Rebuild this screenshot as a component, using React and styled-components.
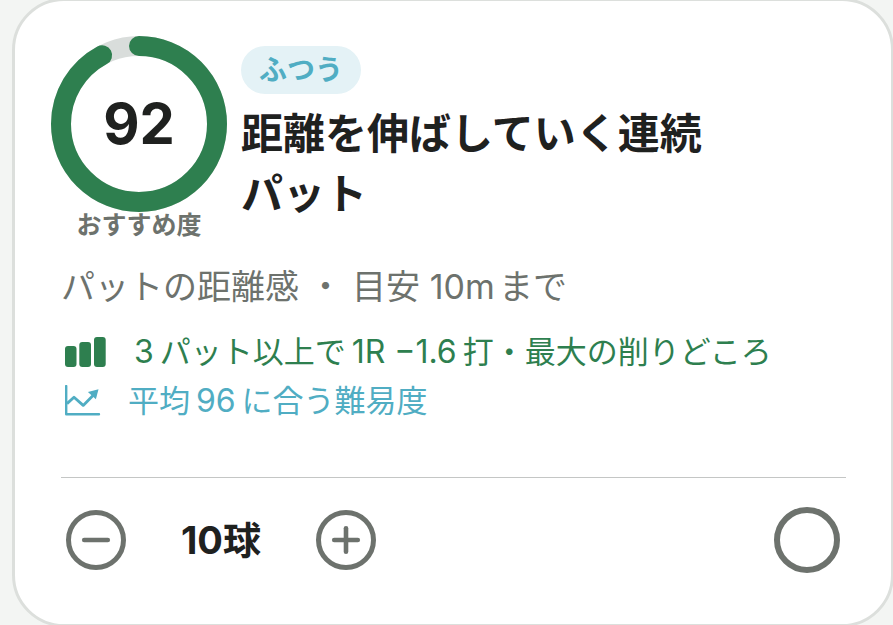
import { useState } from "react"
import styled, { createGlobalStyle } from "styled-components"

const SCORE = 92
const RADIUS = 78
const LENGTH = 2 * Math.PI * RADIUS

export default function App() {
    const [balls, setBalls] = useState(10)

    return (
        <>
            <GlobalStyle />
            <Card>
                <Header>
                    <Score>
                        <Ring>
                            <RingSvg viewBox="0 0 156 156" aria-hidden="true">
                                <circle cx="78" cy="78" r={RADIUS} stroke="#d9dddb" />
                                <circle
                                    cx="78"
                                    cy="78"
                                    r={RADIUS}
                                    stroke="#2e7f4f"
                                    strokeLinecap="round"
                                    strokeDasharray={`${(LENGTH * SCORE) / 100} ${LENGTH}`}
                                    transform="rotate(-90 78 78)"
                                />
                            </RingSvg>
                            <ScoreValue>{SCORE}</ScoreValue>
                        </Ring>
                        <ScoreLabel>おすすめ度</ScoreLabel>
                    </Score>
                    <Heading>
                        <Badge>ふつう</Badge>
                        <Title>距離を伸ばしていく連続パット</Title>
                    </Heading>
                </Header>
                <Summary>パットの距離感 ・ 目安 10mまで</Summary>
                <Reasons>
                    <Reason $color="#2e7f4f">
                        <BarsIcon />
                        <span><Num>3</Num>パット以上で<Num>1R −1.6</Num>打・最大の削りどころ</span>
                    </Reason>
                    <Reason $color="#50adc3">
                        <TrendIcon />
                        <span>平均<Num>96</Num>に合う難易度</span>
                    </Reason>
                </Reasons>
                <Footer>
                    <Stepper>
                        <RoundButton aria-label="減らす" onClick={() => setBalls(Math.max(0, balls - 1))}>
                            <StepIcon />
                        </RoundButton>
                        <Count>{balls}球</Count>
                        <RoundButton aria-label="増やす" onClick={() => setBalls(balls + 1)}>
                            <StepIcon plus />
                        </RoundButton>
                    </Stepper>
                    <Check type="checkbox" aria-label="完了" />
                </Footer>
            </Card>
        </>
    )
}

function BarsIcon() {
    return (
        <svg width="42" height="32" viewBox="0 0 42 32" fill="currentColor" aria-hidden="true">
            <rect x="1" y="10" width="11.5" height="21" rx="3" />
            <rect x="15.3" y="6" width="11.7" height="25" rx="3" />
            <rect x="30" y="1" width="11.7" height="30" rx="3" />
        </svg>
    )
}

function TrendIcon() {
    return (
        <svg width="38" height="32" viewBox="0 0 38 32" fill="none" stroke="currentColor" aria-hidden="true">
            <path d="M2.2 1v28.3H35" strokeWidth="2.4" strokeLinecap="round" strokeLinejoin="round" />
            <path d="M3 18.6l7-6.4 9.2 8.2L30.5 9" strokeWidth="2.8" strokeLinejoin="round" />
            <path d="M34.5 4.2l-2.6 10-8-7.2z" fill="currentColor" stroke="none" />
        </svg>
    )
}

function StepIcon({ plus }) {
    return (
        <svg width="30" height="30" viewBox="0 0 30 30" stroke="currentColor" strokeWidth="4.6" strokeLinecap="round" aria-hidden="true">
            <path d="M3.2 15h23.6" />
            {plus && <path d="M15 3.2v23.6" />}
        </svg>
    )
}

// Card styling components
const GlobalStyle = createGlobalStyle`
* {
    box-sizing: border-box;
}
body {
    margin: 0;
    background: #f3f5f3;
    color: #1f211f;
    font-family: Inter, "Noto Sans CJK JP", sans-serif;
    text-autospace: normal;
    overflow: hidden;
}
`
const Card = styled.article`
margin: -2px -1px -2px 12px;
padding: 45px 45px 51px 46px;
border: 3px solid #dcdfdc;
border-radius: 52px;
background: #fff;
`
const Header = styled.header`
display: flex;
align-items: flex-start;
gap: 24px;
`
const Score = styled.div`
flex: none;
width: 156px;
`
const Ring = styled.div`
display: grid;
place-items: center;
height: 156px;
`
const RingSvg = styled.svg`
grid-area: 1 / 1;
width: 156px;
height: 156px;
overflow: visible;
fill: none;
stroke-width: 20px;
`
const ScoreValue = styled.span`
grid-area: 1 / 1;
font-size: 56px;
font-weight: 700;
line-height: 60px;
`
const ScoreLabel = styled.div`
margin-top: 5px;
font-size: 25px;
font-weight: 600;
line-height: 36px;
text-align: center;
color: #6d726d;
`
const Heading = styled.div`
flex: 1;
display: flex;
flex-direction: column;
align-items: flex-start;
gap: 10px;
`
const Badge = styled.span`
padding: 0 18px;
border-radius: 24px;
background: #e4f2f6;
color: #50adc3;
font-size: 28px;
font-weight: 600;
line-height: 48px;
`
const Title = styled.h1`
margin: 0;
max-width: 11em;
font-size: 42px;
font-weight: 700;
line-height: 60px;
`
const Summary = styled.p`
margin: 22px 0 0;
font-size: 34px;
line-height: 44px;
color: #6d726d;
`
const Reasons = styled.ul`
display: flex;
flex-direction: column;
gap: 9px;
margin: 23px 0 0;
padding: 0 0 0 3px;
list-style: none;
`
const Reason = styled.li`
display: flex;
align-items: center;
gap: 26px;
font-size: 31px;
line-height: 40px;
color: ${({ $color }) => $color};
`
const Num = styled.span`
margin: 0 2px;
font-size: 32px;
line-height: 32px;
`
const Footer = styled.footer`
display: flex;
align-items: center;
justify-content: space-between;
margin-top: 56px;
padding: 29px 6px 0 5px;
border-top: 1px solid #c4c6c5;
`
const Stepper = styled.div`
display: flex;
align-items: center;
`
const RoundButton = styled.button`
display: grid;
place-items: center;
width: 60px;
height: 60px;
padding: 0;
border: 5px solid #6d726d;
border-radius: 50%;
background: transparent;
color: #6d726d;
cursor: pointer;
`
const Count = styled.output`
min-width: 190px;
font-size: 38px;
font-weight: 700;
line-height: 48px;
text-align: center;
text-autospace: no-autospace;
`
const Check = styled.input`
appearance: none;
width: 66px;
height: 66px;
margin: 0;
border: 6px solid #6d726d;
border-radius: 50%;
cursor: pointer;
&:checked {
    background: #2e7f4f;
}
`
